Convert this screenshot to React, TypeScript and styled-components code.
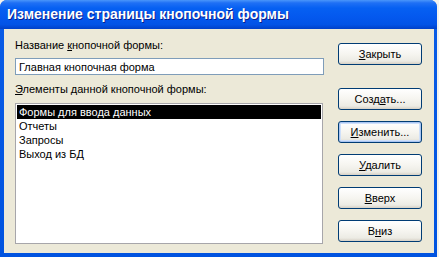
import React from "react"
import styled, { createGlobalStyle } from "styled-components"

const GlobalStyle = createGlobalStyle`
  html, body {
    margin: 0;
    padding: 0;
    background: #f4f3ee;
  }
`

const items = ["Формы для ввода данных", "Отчеты", "Запросы", "Выход из БД"]

const buttons: { before: string; key: string; after: string; focused?: boolean }[] = [
  { before: "Созд", key: "а", after: "ть..." },
  { before: "", key: "И", after: "зменить...", focused: true },
  { before: "", key: "У", after: "далить" },
  { before: "", key: "В", after: "верх" },
  { before: "В", key: "н", after: "из" },
]

const App = () => {
  return (
    <>
      <GlobalStyle />
      <Window>
        <TitleBar>Изменение страницы кнопочной формы</TitleBar>
        <Body>
          <LeftColumn>
            <Label>
              Название <u>к</u>нопочной формы:
            </Label>
            <TextInput defaultValue="Главная кнопочная форма" />
            <Label $gap={8}>
              <u>Э</u>лементы данной кнопочной формы:
            </Label>
            <ListBox>
              {items.map((item, i) => (
                <ListItem key={item} $selected={i === 0}>
                  {item}
                </ListItem>
              ))}
            </ListBox>
          </LeftColumn>
          <RightColumn>
            <Button>
              <u>З</u>акрыть
            </Button>
            <ButtonStack>
              {buttons.map((b) => (
                <Button key={b.key + b.after} $focused={b.focused}>
                  {b.before}
                  <u>{b.key}</u>
                  {b.after}
                </Button>
              ))}
            </ButtonStack>
          </RightColumn>
        </Body>
      </Window>
    </>
  )
}

export default App

const Window = styled.div`
  width: 437px;
  height: 257px;
  display: flex;
  flex-direction: column;
  background: linear-gradient(180deg, #0a5ce6 0%, #0053e0 100%);
  border-radius: 7px 7px 0 0;
  box-sizing: border-box;
  font-family: "Liberation Sans", Arial, sans-serif;
`

const TitleBar = styled.div`
  height: 29px;
  flex-shrink: 0;
  display: flex;
  align-items: center;
  padding-left: 7px;
  padding-bottom: 1px;
  box-sizing: border-box;
  color: #ffffff;
  font-weight: bold;
  font-size: 14px;
  text-shadow: 1px 1px 0 #0a1e8c;
  border-radius: 7px 7px 0 0;
  background: linear-gradient(
    180deg,
    #4a96fa 0%,
    #1f70f5 10%,
    #0660f2 28%,
    #0458ee 60%,
    #0253e6 85%,
    #0040c8 100%
  );
`

const Body = styled.div`
  flex: 1;
  display: flex;
  margin: 0 3px 4px 4px;
  background: #ece9d8;
  padding: 10px 0 0 11px;
  box-sizing: border-box;
`

const LeftColumn = styled.div`
  width: 309px;
  display: flex;
  flex-direction: column;
`

const Label = styled.div<{ $gap?: number }>`
  font-size: 11px;
  line-height: 13px;
  color: #000000;
  margin-top: ${({ $gap }) => $gap ?? 0}px;
  white-space: nowrap;
`

const TextInput = styled.input`
  margin-top: 6px;
  width: 309px;
  height: 17px;
  box-sizing: border-box;
  border: 1px solid #7f9db9;
  padding: 0 3px;
  font-family: "Liberation Sans", Arial, sans-serif;
  font-size: 11px;
  color: #000000;
  background: #ffffff;
  outline: none;
`

const ListBox = styled.div`
  margin-top: 7px;
  width: 308px;
  height: 141px;
  box-sizing: border-box;
  border: 1px solid #a7a6aa;
  background: #ffffff;
  padding: 1px 1px;
`

const ListItem = styled.div<{ $selected?: boolean }>`
  height: 14px;
  line-height: 14px;
  padding-left: 2px;
  font-size: 11px;
  white-space: nowrap;
  color: ${({ $selected }) => ($selected ? "#ffffff" : "#000000")};
  background: ${({ $selected }) => ($selected ? "#000000" : "transparent")};
`

const RightColumn = styled.div`
  margin-left: 14px;
  padding-top: 4px;
  display: flex;
  flex-direction: column;
`

const ButtonStack = styled.div`
  margin-top: 23px;
  display: flex;
  flex-direction: column;
  gap: 11px;
`

const Button = styled.button<{ $focused?: boolean }>`
  width: 84px;
  height: 22px;
  box-sizing: border-box;
  border: 1px solid #003c74;
  border-radius: 3px;
  padding: 0;
  font-family: "Liberation Sans", Arial, sans-serif;
  font-size: 11px;
  color: #000000;
  background: linear-gradient(180deg, #ffffff 0%, #f6f5f0 50%, #ecebe4 85%, #d6d0c5 100%);
  box-shadow: ${({ $focused }) =>
    $focused ? "inset 0 0 0 1px #a9c5f2, inset 0 0 0 2px #cfe0fa" : "none"};
  cursor: pointer;
`
